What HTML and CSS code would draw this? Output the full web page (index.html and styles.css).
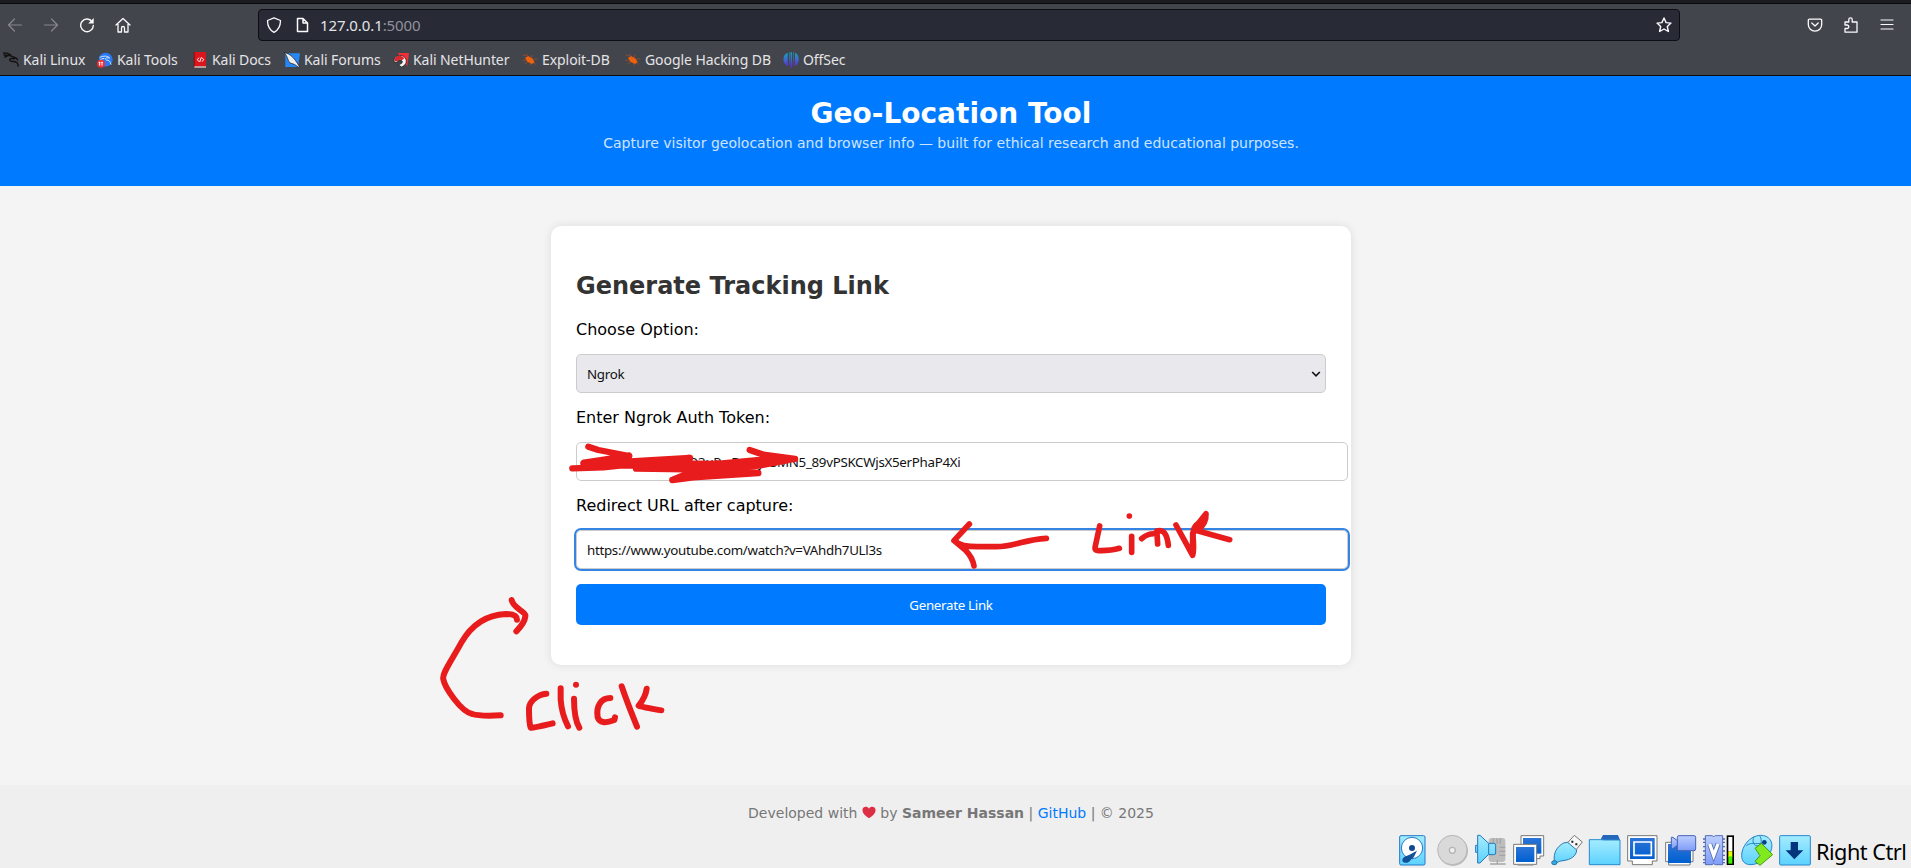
FILE: index.html
```
<!DOCTYPE html>
<html lang="en">
<head>
<meta charset="utf-8">
<title>Geo-Location Tool</title>
<link rel="stylesheet" href="styles.css">
</head>
<body>
<div class="browser">
  <div class="tabstrip"></div>
  <div class="toolbar">
    <div class="nav">
      <svg class="dim" viewBox="0 0 16 16"><path d="M14.5 8H1.5M7.5 2 1.5 8l6 6"/></svg>
      <svg class="dim" viewBox="0 0 16 16"><path d="M1.5 8h13M8.500 2l6 6-6 6"/></svg>
      <svg viewBox="0 0 16 16"><path d="M13.2 4.800A6.300 6.300 0 1 0 14.300 8.500" stroke-width="1.4"/><path d="M14.700 1v5.500H9.200z" fill="#fbfbfe" stroke="none"/></svg>
      <svg viewBox="0 0 16 16"><path d="M1 8 8 1.500 15 8M3 7v8h3.500v-4a1.500 1.500 0 0 1 3 0v4H13V7" stroke-width="1.3"/></svg>
    </div>
    <div class="urlbar">
      <svg viewBox="0 0 16 16"><path d="M8 .8 14.500 3.500C14.500 9 12.500 13 8 15.400 3.500 13 1.500 9 1.500 3.500z" stroke-width="1.3"/></svg>
      <svg viewBox="0 0 16 16" class="doc"><path d="M3.500 1.500H9l4.500 4.500v8.500h-10zM9 1.500V6h4.500" stroke-width="1.5"/></svg>
      <span class="url">127.0.0.1<span>:5000</span></span>
      <svg viewBox="0 0 16 16" class="star"><path d="m8 1 2.100 4.600 4.900.5-3.700 3.400 1.100 5L8 12l-4.400 2.500 1.100-5L1 6.100l4.900-.5z" stroke-width="1.4"/></svg>
    </div>
    <div class="tools">
      <svg viewBox="0 0 16 16"><path d="M2.500 2.200h11a1.200 1.200 0 0 1 1.200 1.200V7.500a6.700 6.700 0 0 1-13.400 0V3.400a1.200 1.200 0 0 1 1.200-1.200zM4.800 6 8 9l3.200-3" stroke-width="1.3"/></svg>
      <svg viewBox="0 0 16 16"><path d="M2 15.200V11.500h2a1.600 1.600 0 0 0 0-3.500H2V5h3.800V2.600a1.700 1.700 0 0 1 3.400 0V5H14v10.200z" stroke-width="1.300"/></svg>
      <svg viewBox="0 0 16 16"><path d="M2 3h12M2 7.500h12M2 12h12" stroke-width="1.200"/></svg>
    </div>
  </div>
  <div class="bookmarks">
    <div class="bm b1"><svg viewBox="0 0 48 48"><path d="M0 3 14 4l11 6M2 9l12 1M4 16l12-6 14 4c8 2 6 7 0 6-8-2-12 2-9 6 4 5 14 0 21 6 4 4 3 8 4 12M29 15l11 3 5 7M21 27l8 2" fill="none" stroke="#111" stroke-width="4"/></svg><span>Kali Linux</span></div>
    <div class="bm b2"><svg viewBox="0 0 48 48"><circle cx="26" cy="23" r="21" fill="#2879f5"/><path d="M8 16c12-5 24-5 30 2-12-2-16 2-10 6 8 0 12 4 14 14M10 22l12-3" fill="none" stroke="#d6e7fc" stroke-width="3"/><circle cx="12" cy="35" r="12" fill="#f52c32"/><path d="M8 30v11M15 30v11M5 31h5M13 31h5" stroke="#fff" stroke-width="3"/></svg><span>Kali Tools</span></div>
    <div class="bm b3"><svg viewBox="0 0 48 48"><path d="M5 0h37v47H5z" fill="#7e1014"/><path d="M8 0h34v42H8z" fill="#dc151d"/><path d="M7 43h35v4H7z" fill="#dedede"/><path d="m21 17-5 6 5 6M30 17l5 6-5 6M28 16l-5 14" stroke="#fff" stroke-width="3" fill="none"/></svg><span>Kali Docs</span></div>
    <div class="bm b4"><svg viewBox="0 0 48 48"><path d="M4 4h44L42 45H4z" fill="#2588f4"/><path d="M1 2c10 2 14 4 21 10 8 6 16 18 25 33l-3 1-13-9-13-4C10 24 12 14 1 2z" fill="#eee" stroke="#111" stroke-width="2"/></svg><span>Kali Forums</span></div>
    <div class="bm b5"><svg viewBox="0 0 48 48"><path d="M14 3h34l-5 40z" fill="#ef3038"/><path d="M4 31C-2 10 26 4 36 17c9 13 1 24-11 28l-8-7c10-3 13-7 10-11-4-6-14-4-12 3z" fill="#f4f4f4" stroke="#111" stroke-width="2"/><path d="M5 28C2 10 26 6 34 19l-7 6c-4-5-13-3-12 3z" fill="#df252c"/></svg><span>Kali NetHunter</span></div>
    <div class="bm b6"><svg viewBox="0 0 48 48"><path d="m9 17 10-5 13 8 6 11-8 5-14-7z" fill="#f1610c"/><path d="M2 10h12M1 25h12M7 36l12-7M15 6l5 12M30 9l-2 10M34 21h12M34 30l8 8M27 32v9" stroke="#c65320" stroke-width="1.500"/></svg><span>Exploit-DB</span></div>
    <div class="bm b7"><svg viewBox="0 0 48 48"><path d="m9 17 10-5 13 8 6 11-8 5-14-7z" fill="#f1610c"/><path d="M2 10h12M1 25h12M7 36l12-7M15 6l5 12M30 9l-2 10M34 21h12M34 30l8 8M27 32v9" stroke="#c65320" stroke-width="1.500"/></svg><span>Google Hacking DB</span></div>
    <div class="bm b8"><svg viewBox="0 0 48 48"><defs><linearGradient id="osec" x1="0" y1="0" x2="0" y2="1"><stop stop-color="#14a9c0"/><stop offset="1" stop-color="#6721db"/></linearGradient></defs><path d="M14 2v40C-3 37-3 7 14 2zM18 1h2v40h-2zM23 1h4v46h-4zM30 1h2v40h-2zM36 2c15 5 15 35 0 40z" fill="url(#osec)"/></svg><span>OffSec</span></div>
  </div>
</div>

<header class="hero">
  <h1>Geo-Location Tool</h1>
  <p>Capture visitor geolocation and browser info — built for ethical research and educational purposes.</p>
</header>

<main class="main">
  <section class="card">
    <h2>Generate Tracking Link</h2>
    <label>Choose Option:</label>
    <div class="field select"><span>Ngrok</span><svg viewBox="0 0 10 10"><path d="m1.200 3 3.800 3.800L8.800 3"/></svg></div>
    <label>Enter Ngrok Auth Token:</label>
    <div class="field input token"><span>Q3uP Dg jV5MN5_89vPSKCWjsX5erPhaP4Xi</span></div>
    <label>Redirect URL after capture:</label>
    <div class="field input focus"><span>https://www.youtube.com/watch?v=VAhdh7ULl3s</span></div>
    <button class="submit" type="button">Generate Link</button>
  </section>
</main>

<footer class="footer">
  <p>Developed with <svg class="heart" viewBox="0 0 16 14"><path d="M8 13.600C3 10.500.5 7.500.5 4.300.5.200 6-.9 8 2.700 10-.9 15.500.2 15.500 4.300 15.500 7.500 13 10.500 8 13.600z"/></svg> by <strong>Sameer Hassan</strong> | <a>GitHub</a> | © 2025</p>
  <div class="status">
    <svg viewBox="39 42 114 96"><defs>
      <linearGradient id="cyan" x1="0" y1="0" x2="0" y2="1"><stop stop-color="#a5ecff"/><stop offset="1" stop-color="#5cd2ff"/></linearGradient>
      <linearGradient id="blue" x1="0" y1="0" x2="0" y2="1"><stop stop-color="#2c75d8"/><stop offset="1" stop-color="#005fd0"/></linearGradient>
      <linearGradient id="violet" x1="0" y1="0" x2="0" y2="1"><stop stop-color="#bccfff"/><stop offset="1" stop-color="#7f9cf8"/></linearGradient></defs>
      <rect x="44" y="47" width="76" height="88" rx="4" fill="url(#cyan)" stroke="#2478c8" stroke-width="3"/>
      <circle cx="81" cy="84" r="32" fill="#fff" stroke="#2478c8" stroke-width="3"/><circle cx="81" cy="84" r="9" fill="#12478e"/><path d="M52 121c0-9 9-12 20-16l24-13c-7 13-8 20-17 26-4 4-5 9-12 10-9 1-14 1-15-7z" fill="#135199"/></svg>
    <svg viewBox="153 42 114 96"><circle cx="204" cy="93" r="45" fill="#bbb"/><circle cx="202" cy="90" r="44" fill="#d9d9d9" stroke="#b7b7b7" stroke-width="3"/><circle cx="202" cy="91" r="9" fill="#eee" stroke="#b4b4b4" stroke-width="4"/></svg>
    <svg viewBox="267 42 114 96"><rect x="311" y="54" width="50" height="72" rx="9" fill="#bdbdbd"/><path d="M325 55v16M336 55v16M346 55v16M343 82h18M343 94h18M343 106h18M337 120v12M315 132h47" stroke="#a5a5a5" stroke-width="4"/><path d="M272 76h6V46h7l26 24h15q6 0 6 6v23q0 5-6 5h-16l-25 25h-7V97h-6z" fill="url(#cyan)" stroke="#2375bb" stroke-width="3"/><path d="M311 71v32M278 77v20" stroke="#2375bb" stroke-width="3"/></svg>
    <svg viewBox="381 42 114 96"><path d="M408 47h68v61h-11v8h-46v-8h-11z" fill="#fff" stroke="#777" stroke-width="3"/><path d="M414 54h55v47h-55z" fill="url(#blue)"/><path d="M386 73h69v60h-69z" fill="#fff" stroke="#777" stroke-width="3"/><path d="M393 81h55v45h-55z" fill="url(#blue)"/><path d="M398 136h47" stroke="#aaa" stroke-width="3"/></svg>
    <svg viewBox="495 42 114 96"><path d="m547 69 21-23 24 20-21 26z" fill="#f6f6f6" stroke="#777" stroke-width="3"/><path d="M559 62h6v6h-6zM571 70h6v6h-6z" fill="#222"/><path d="M508 122c-3-22 7-42 28-53l12-2 27 23c-1 18-17 29-41 32-9 1-15 3-21 8z" fill="url(#cyan)" stroke="#2a78ae" stroke-width="3"/><ellipse cx="508" cy="128" rx="8" ry="6" fill="#31aee8" stroke="#246f9d" stroke-width="3"/></svg>
    <svg viewBox="609 42 114 96"><path d="M646 60 654 45h45l6 15v10h-59z" fill="#2467bd"/><path d="M613 59h34l11 1h47v74h-92z" fill="url(#cyan)" stroke="#278bcf" stroke-width="3"/></svg>
    <svg viewBox="723 42 114 96"><path d="M728 47h88v76h-14v11h-60v-11h-14z" fill="#fff" stroke="#777" stroke-width="3"/><path d="M735 54h74v63h-74z" fill="url(#blue)"/><path d="M747 66h52v40h-52z" fill="none" stroke="#fff" stroke-width="5"/></svg>
    <svg viewBox="57 42 114 96"><path d="M62 67h82v58h-9v10H71v-10h-9z" fill="#fff" stroke="#777" stroke-width="3"/><path d="M69 72h69v57H69z" fill="url(#blue)"/><rect x="97" y="47" width="55" height="45" rx="5" fill="url(#violet)" stroke="#4761b4" stroke-width="3"/><path d="M79 52h5l13 10v14L84 86h-5z" fill="url(#violet)" stroke="#4761b4" stroke-width="3"/></svg>
    <svg viewBox="171 42 114 96"><path d="M174 57h66M174 67h66M174 80h66M174 93h66M174 106h66M174 119h66M174 128h66" stroke="#526cb5" stroke-width="4"/><path d="M181 47h20q5 6 10 0h22v87h-22q-5-6-10 0h-20z" fill="url(#violet)" stroke="#526cb5" stroke-width="3"/><path d="m194 72 12 34 13-34" fill="none" stroke="#526cb5" stroke-width="15"/><path d="m194 72 12 34 13-34" fill="none" stroke="#fff" stroke-width="10"/><path d="M245 46h22v89h-22z" fill="#000"/><path d="M250 51h12v43h-12z" fill="#fff"/><path d="M250 94h12v17h-12z" fill="#eaff00"/><path d="M250 109h12v22h-12z" fill="#45f000"/></svg>
    <svg viewBox="285 42 114 96"><path d="M290 106c0-26 24-60 57-60 25 0 37 18 33 39-4 26-35 48-62 49-19 0-28-10-28-28z" fill="url(#cyan)" stroke="#2386c7" stroke-width="3"/><path d="M327 50c-8 18 2 29 13 28 12-4 10-23 4-31M304 77c14-12 28-3 48-8" fill="none" stroke="#2386c7" stroke-width="3"/><path d="m330 85 19-15 34 34-38 32-15-12 15-17z" fill="#81e920" stroke="#4b9913" stroke-width="3"/><circle cx="358" cy="67" r="7" fill="#103f80"/></svg>
    <svg viewBox="399 42 114 96"><rect x="404" y="47" width="92" height="88" rx="3" fill="url(#cyan)" stroke="#2786cc" stroke-width="3"/><path d="M437 66h22v25h16l-27 27-26-27h15z" fill="#04347b"/></svg>
    <span>Right Ctrl</span>
  </div>
</footer>

<!-- Hand-drawn pen notes on top of the page -->
<svg class="ink" viewBox="0 0 1911 868">
  <g transform="translate(560 430) scale(.33333)" stroke-width="19">
    <path d="M85 50 115 60 208 78M207 78 72 98M115 92 207 76M37 115 130 112 215 103 387 84M70 100 210 94 390 84M80 107H270L340 100 465 102M228 116 380 118 470 112M229 104 300 98M337 150 400 142 595 129M340 148 390 128 595 129M390 118 590 129M470 100 530 112M470 102 600 90 705 87M420 113 590 108 705 87M569 60 610 74 705 87M620 80 705 87M400 124 520 118"/>
  </g>
  <g transform="translate(940 420) scale(.33333)" stroke-width="17">
    <path d="m88 312-46 50 34 28q22 23 26 48M44 362q18 18 70 18h55c55 0 85-22 150-25"/>
    <path d="m479 318-14 65q-1 9 10 9 37 1 63-7M568 288v.1M575 349v48M605 356q20-18 46-14l2 30M651 333q28-9 34 43"/>
    <path d="m708 315 50 91c10-37-12-76 16-95l24-30q2 29-26 51l97 27M758 398V340l34-45"/>
  </g>
  <g transform="translate(420 560) scale(.33333)" stroke-width="18">
    <path d="M242 466q-65 3-85-4c-35-7-83-80-87-104-5-17 24-55 54-110q47-82 133-86 34 0 34 17M275 120c4 24 44 36 41 49q-2 19-27 45"/>
    <path d="M379 401c-26 2-52 24-52 44q0 45 5 58 8 1 66-13M422 385v34q3 43 22 80M468 374v.1M462 416q0 60 16 87M571 414c-26 0-44 22-38 58q8 24 50 8l2-8M605 379q17 50 46 121M680 386q-3 25-24 51 10 4 68 14"/>
  </g>
</svg>
</body>
</html>
```

FILE: styles.css
```
* { box-sizing: border-box; }
body { margin: 0; width: 1911px; height: 868px; overflow: hidden; background: #f4f4f4; font-family: "DejaVu Sans", sans-serif; display: flex; flex-direction: column; position: relative; }
svg { display: block; flex: none; }
h1, h2, p { margin: 0; }

.browser { height: 76px; background: #43454c; border-bottom: 1px solid #0c0c0d; font-family: "Noto Sans", sans-serif; color: #e4e4e7; flex: none; }
.tabstrip { height: 4px; background: #1b1c22; border-bottom: 1px solid #08090b; }
.toolbar { height: 40px; display: flex; align-items: center; padding: 1px 16px 0 7px; }
.toolbar svg { width: 16px; height: 16px; fill: none; stroke: #fbfbfe; stroke-width: 1.2; stroke-linecap: round; stroke-linejoin: round; }
.toolbar .dim { stroke: #87888c; }
.nav { display: flex; gap: 20px; width: 251px; }
.urlbar { width: 1422px; height: 32px; background: #282a36; border: 1px solid #0d0e12; border-radius: 4px; display: flex; align-items: center; padding: 0 7px; }
.urlbar .doc { margin-left: 12px; }
.url { margin-left: 10px; font-size: 15px; letter-spacing: -.1px; white-space: nowrap; line-height: 20px; }
.url span { color: #91929b; }
.urlbar .star { margin-left: auto; }
.tools { display: flex; gap: 20px; margin-left: auto; }
.bookmarks { display: flex; height: 31px; padding-left: 3px; align-items: center; }
.bm { display: flex; align-items: center; gap: 4px; height: 20px; font-size: 14px; letter-spacing: -.07px; white-space: nowrap; flex: none; }
.bm svg { width: 16px; height: 16px; }
.b1 { width: 94px; }
.b2 { width: 95px; }
.b3 { width: 92px; }
.b4 { width: 109px; }
.b5 { width: 129px; }
.b6 { width: 103px; }
.b7 { width: 158px; }

.hero { height: 110px; flex: none; background: #007bff; color: #fff; text-align: center; padding: 21px 9px 0 0; }
.hero h1 { font-size: 28px; line-height: 33px; }
.hero p { font-size: 14px; line-height: 17px; margin-top: 5px; opacity: .8; }

.main { padding: 40px 0 0 551px; height: 599px; flex: none; }
.card { width: 800px; height: 439px; background: #fff; border-radius: 10px; box-shadow: 0 0 10px rgba(0,0,0,.1); padding: 46px 25px 0; }
.card h2 { font-size: 24px; line-height: 28px; color: #333; margin-bottom: 20px; }
.card label { display: block; font-size: 16px; line-height: 19px; margin-bottom: 15px; }
.field { height: 39px; border: 1px solid #ccc; border-radius: 5px; padding: 0 10px; display: flex; align-items: center; font: 13.333px "Noto Sans", sans-serif; letter-spacing: -.3px; margin-bottom: 15px; color: #111; white-space: nowrap; }
.select { background: #e9e9ed; justify-content: space-between; padding-right: 4px; }
.select svg { width: 10px; height: 10px; fill: none; stroke: #111; stroke-width: 1.6; }
.input { width: 772px; background: #fff; }
.token { padding-left: 111px; word-spacing: 7px; }
.focus { outline: 2px solid #3584e4; outline-offset: 0; margin-bottom: 0; }
.submit { display: block; width: 750px; height: 41px; border: 0; border-radius: 5px; background: #007bff; color: #fff; font: 13.333px "Noto Sans", sans-serif; letter-spacing: -.3px; padding: 0; margin-top: 15px; }

.footer { background: #efefef; height: 83px; flex: none; color: #777; }
.footer p { font-size: 14px; line-height: 17px; padding: 20px 9px 0 0; height: 49px; text-align: center; }
.footer a { color: #007bff; }
.heart { display: inline-block; width: 14px; height: 13px; vertical-align: -1px; fill: #dd2e44; }
.status { display: flex; padding-left: 1398px; height: 34px; }
.status svg { width: 38px; height: 32px; }
.status span { font: 21.7px "Noto Sans", sans-serif; line-height: 36px; letter-spacing: -.5px; color: #000; white-space: nowrap; }

.ink { position: absolute; left: 0; top: 0; width: 1911px; height: 868px; fill: none; stroke: #e81c1c; stroke-linecap: round; stroke-linejoin: round; pointer-events: none; }
```
